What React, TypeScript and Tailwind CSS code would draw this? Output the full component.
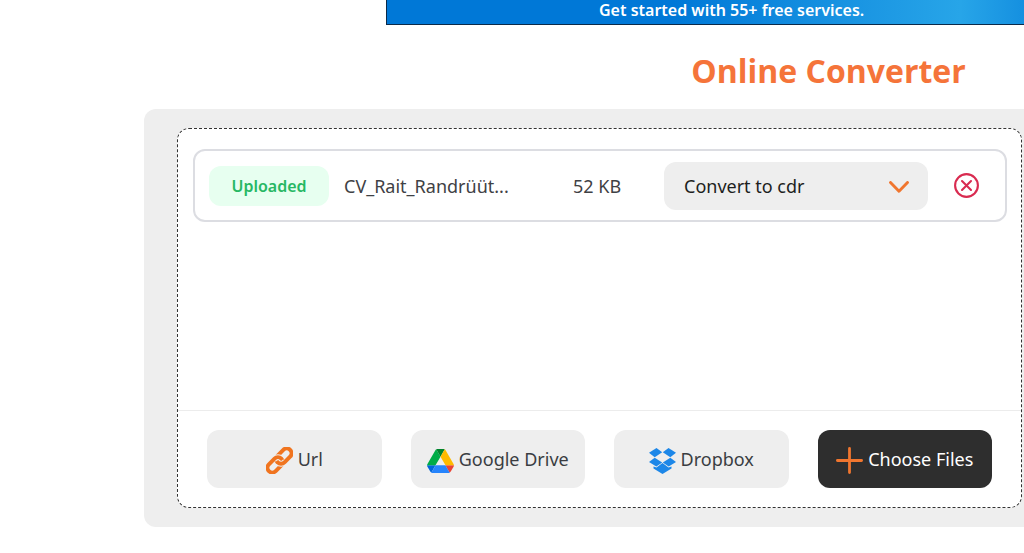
import React, { useState } from 'react';

const FORMATS = ['cdr', 'pdf', 'svg', 'png', 'docx'];

const LinkIcon: React.FC = () => (
  <svg viewBox="0 0 27 27" className="w-[27px] h-[27px]" fill="none" aria-hidden="true">
    <g transform="translate(13.5 13.5) rotate(-45)">
      <rect x="-2.6" y="-4.8" width="17.6" height="9.6" rx="4.8" stroke="#f0741f" strokeWidth="4" />
      <path d="M-3.4 -4.8H-2.2A4.8 4.8 0 0 1 2.6 0" stroke="#eeeeee" strokeWidth="6" />
      <rect x="-15" y="-4.8" width="17.6" height="9.6" rx="4.8" stroke="#f0741f" strokeWidth="4" />
      <path d="M-2.6 0A4.8 4.8 0 0 0 2.2 4.8H3.4" stroke="#eeeeee" strokeWidth="6" />
      <path d="M-2.6 -.8V0A4.8 4.8 0 0 0 2.2 4.8H4" stroke="#f0741f" strokeWidth="4" />
    </g>
  </svg>
);

const GoogleDriveIcon: React.FC = () => (
  <svg viewBox="0 0 87.3 78" className="w-[27px] h-6" aria-hidden="true">
    <path d="m6.6 66.85 3.85 6.65c.8 1.4 1.95 2.5 3.3 3.3l13.75-23.8h-27.5c0 1.55.4 3.1 1.2 4.5z" fill="#0066da" />
    <path d="m43.65 25-13.75-23.8c-1.35.8-2.5 1.9-3.3 3.3l-25.4 44a9.06 9.06 0 0 0 -1.2 4.5h27.5z" fill="#00ac47" />
    <path d="m73.55 76.8c1.35-.8 2.5-1.9 3.3-3.3l1.6-2.75 7.65-13.25c.8-1.4 1.2-2.95 1.2-4.5h-27.502l5.852 11.5z" fill="#ea4335" />
    <path d="m43.65 25 13.75-23.8c-1.35-.8-2.9-1.2-4.5-1.2h-18.5c-1.6 0-3.15.45-4.5 1.2z" fill="#00832d" />
    <path d="m59.8 53h-32.3l-13.75 23.8c1.35.8 2.9 1.2 4.5 1.2h50.8c1.6 0 3.15-.45 4.5-1.2z" fill="#2684fc" />
    <path d="m73.4 26.5-12.7-22c-.8-1.4-1.95-2.5-3.3-3.3l-13.75 23.8 16.15 28h27.45c0-1.55-.4-3.1-1.2-4.5z" fill="#ffba00" />
  </svg>
);

const DropboxIcon: React.FC = () => (
  <svg viewBox="0 0 27 26" className="w-[27px] h-[26px]" fill="#1d87e8" aria-hidden="true">
    <path d="M7.5 0 13.2 4.3 5.7 9.2 0 4.8z" />
    <path d="M19.5 0 27 4.8 21.3 9.2 13.8 4.3z" />
    <path d="M5.7 9.8 13.2 14.4 7.3 18.6 0 14z" />
    <path d="M21.3 9.8 27 14 19.7 18.6 13.8 14.4z" />
    <path d="M13.5 15.1 19.5 19.5 22.5 18.6V20.4L13.5 26 4.5 20.4V18.6L7.5 19.5z" />
  </svg>
);

const PlusIcon: React.FC = () => (
  <svg viewBox="0 0 27 27" className="w-[27px] h-[27px]" fill="none" stroke="#f0762f" strokeWidth="2.8" strokeLinecap="round" aria-hidden="true">
    <path d="M13.5 1.4v24.2M1.4 13.5h24.2" />
  </svg>
);

interface SourceButtonProps {
  label: string;
  icon: React.ReactNode;
  dark?: boolean;
}

const SourceButton: React.FC<SourceButtonProps> = ({ label, icon, dark }) => (
  <button
    type="button"
    className={`flex items-center justify-center gap-[5px] h-[58px] pb-px rounded-xl text-lg whitespace-nowrap cursor-pointer ${
      dark ? 'bg-[#2e2e2e] text-white' : 'bg-[#eeeeee] text-[#3a3d42]'
    }`}
  >
    <span className="shrink-0 pt-1">{icon}</span>
    {label}
  </button>
);

interface FileRowProps {
  name: string;
  size: string;
  onRemove: () => void;
}

const FileRow: React.FC<FileRowProps> = ({ name, size, onRemove }) => {
  const [format, setFormat] = useState('cdr');

  return (
    <li className="flex items-center h-[73px] pl-[14px] pr-[26px] rounded-xl border-2 border-[#dcdde2]">
      <span className="shrink-0 w-[120px] h-10 leading-10 rounded-xl bg-[#e7fff0] text-[#27b864] text-base font-semibold text-center">
        Uploaded
      </span>
      <span className="ml-[15px] w-[185px] text-lg text-[#3f4145] truncate">{name}</span>
      <span className="ml-auto w-[91px] text-lg text-[#3f4145] whitespace-nowrap">{size}</span>
      <div className="relative shrink-0 w-[264px]">
        <select
          aria-label="Convert to"
          value={format}
          onChange={(e) => setFormat(e.target.value)}
          className="block appearance-none w-full h-12 pl-5 pr-12 rounded-xl bg-[#eeeeee] text-lg text-[#1d1f21] outline-none"
        >
          {FORMATS.map((f) => (
            <option key={f} value={f}>
              Convert to {f}
            </option>
          ))}
        </select>
        <svg viewBox="0 0 20 12" className="absolute right-[19px] top-[19px] w-5 h-3 pointer-events-none" fill="none" stroke="#f0762f" strokeWidth="2.9" strokeLinecap="round" strokeLinejoin="round" aria-hidden="true">
          <path d="M1.5 1.5 10 10.3l8.5-8.8" />
        </svg>
      </div>
      <button type="button" aria-label={`Remove ${name}`} onClick={onRemove} className="ml-[26px] shrink-0 cursor-pointer">
        <svg viewBox="0 0 25 25" className="w-[25px] h-[25px]" fill="none" stroke="#d92b50" strokeWidth="2.1" strokeLinecap="round" aria-hidden="true">
          <circle cx="12.5" cy="12.5" r="11.4" />
          <path d="m8 8 9 9M17 8l-9 9" />
        </svg>
      </button>
    </li>
  );
};

export default function App() {
  const [files, setFiles] = useState([{ name: 'CV_Rait_Randrüüt...', size: '52 KB' }]);

  return (
    <div className="bg-white font-['Noto_Sans','Open_Sans',sans-serif] overflow-hidden">
      <a
        href="#services"
        className="flex items-center ml-[386px] h-[25px] pl-[212px] pb-[5px] border-l border-b border-[#0b2a4a] bg-linear-to-r from-[#0078d7] from-45% via-[#27a5e8] via-90% to-[#1590e0] text-white text-base font-semibold whitespace-nowrap"
      >
        Get started with 55+ free services.
      </a>

      <h1 className="ml-[633px] mt-6 font-['Open_Sans','Noto_Sans',sans-serif] text-[32px] leading-[44px] font-bold text-center text-[#f5743a] whitespace-nowrap">
        Online Converter
      </h1>

      <main className="ml-[144px] mt-4 pt-[19px] pb-[19px] pl-[33px] pr-[2px] rounded-l-xl bg-[#eeeeee]">
        <section className="rounded-xl border border-dashed border-[#333333] bg-white">
          <ul className="min-h-[281px] pl-[15px] pr-[14px] pt-5">
            {files.map((file) => (
              <FileRow
                key={file.name}
                name={file.name}
                size={file.size}
                onRemove={() => setFiles(files.filter((f) => f !== file))}
              />
            ))}
          </ul>
          <div className="grid grid-cols-4 gap-[29px] pt-[19px] pb-[19px] px-[29px] border-t border-[#ececec]">
            <SourceButton label="Url" icon={<LinkIcon />} />
            <SourceButton label="Google Drive" icon={<GoogleDriveIcon />} />
            <SourceButton label="Dropbox" icon={<DropboxIcon />} />
            <SourceButton label="Choose Files" icon={<PlusIcon />} dark />
          </div>
        </section>
      </main>
    </div>
  );
}
